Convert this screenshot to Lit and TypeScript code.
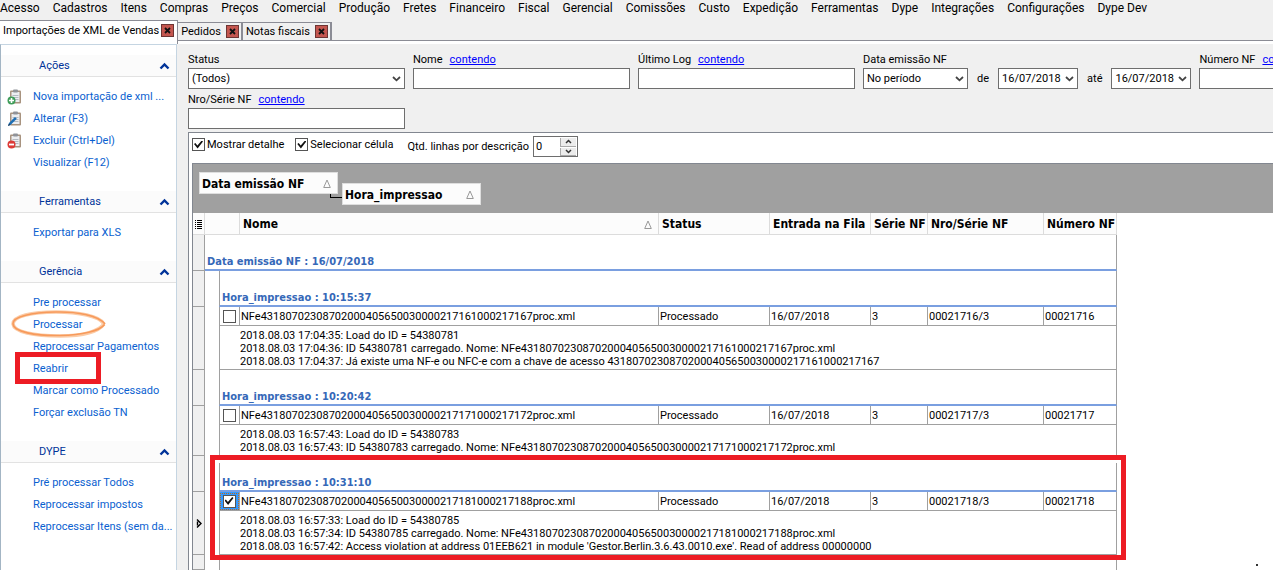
import { LitElement, html, css, svg, nothing } from "lit";
import { customElement, state } from "lit/decorators.js";
import { classMap } from "lit/directives/class-map.js";

const MENU = [
  "Acesso", "Cadastros", "Itens", "Compras", "Preços", "Comercial", "Produção", "Fretes",
  "Financeiro", "Fiscal", "Gerencial", "Comissões", "Custo", "Expedição", "Ferramentas",
  "Dype", "Integrações", "Configurações", "Dype Dev",
];

const TABS = ["Importações de XML de Vendas", "Pedidos", "Notas fiscais"];

type Mark = "ellipse" | "box";
interface Action { label: string; icon?: "add" | "edit" | "remove"; mark?: Mark; }
interface Section { title: string; items: Action[]; }

const SECTIONS: Section[] = [
  {
    title: "Ações",
    items: [
      { label: "Nova importação de xml ...", icon: "add" },
      { label: "Alterar (F3)", icon: "edit" },
      { label: "Excluir (Ctrl+Del)", icon: "remove" },
      { label: "Visualizar (F12)" },
    ],
  },
  { title: "Ferramentas", items: [{ label: "Exportar para XLS" }] },
  {
    title: "Gerência",
    items: [
      { label: "Pre processar" },
      { label: "Processar", mark: "ellipse" },
      { label: "Reprocessar Pagamentos" },
      { label: "Reabrir", mark: "box" },
      { label: "Marcar como Processado" },
      { label: "Forçar exclusão TN" },
    ],
  },
  {
    title: "DYPE",
    items: [
      { label: "Pré processar Todos" },
      { label: "Reprocessar impostos" },
      { label: "Reprocessar Itens (sem da..." },
    ],
  },
];

interface Entry {
  time: string; file: string; number: string; log: string[]; selected?: boolean;
}

const ENTRIES: Entry[] = [
  {
    time: "10:15:37",
    file: "NFe43180702308702000405650030000217161000217167proc.xml",
    number: "00021716",
    log: [
      "2018.08.03 17:04:35: Load do ID = 54380781",
      "2018.08.03 17:04:36: ID 54380781 carregado. Nome: NFe43180702308702000405650030000217161000217167proc.xml",
      "2018.08.03 17:04:37: Já existe uma NF-e ou NFC-e com a chave de acesso 43180702308702000405650030000217161000217167",
    ],
  },
  {
    time: "10:20:42",
    file: "NFe43180702308702000405650030000217171000217172proc.xml",
    number: "00021717",
    log: [
      "2018.08.03 16:57:43: Load do ID = 54380783",
      "2018.08.03 16:57:43: ID 54380783 carregado. Nome: NFe43180702308702000405650030000217171000217172proc.xml",
    ],
  },
  {
    time: "10:31:10",
    file: "NFe43180702308702000405650030000217181000217188proc.xml",
    number: "00021718",
    selected: true,
    log: [
      "2018.08.03 16:57:33: Load do ID = 54380785",
      "2018.08.03 16:57:34: ID 54380785 carregado. Nome: NFe43180702308702000405650030000217181000217188proc.xml",
      "2018.08.03 16:57:42: Access violation at address 01EEB621 in module 'Gestor.Berlin.3.6.43.0010.exe'. Read of address 00000000",
    ],
  },
];

const chevron = html`<svg class="chevron" width="9" height="6" viewBox="0 0 9 6"><path d="M1 1 L4.5 4.3 L8 1" fill="none" stroke="#444" stroke-width="1.8"/></svg>`;
const triangle = html`<svg class="triangle" width="8" height="9" viewBox="0 0 8 9"><path d="M4 1 L7.3 8.5 H0.7 Z" fill="none" stroke="#999" stroke-width="1"/></svg>`;

const badges = {
  add: svg`<circle cx="4.5" cy="11.5" r="4" fill="#3f9d5a"/><path d="M4.5 9v5M2 11.5h5" stroke="#fff" stroke-width="1.6"/>`,
  edit: svg`<path d="M1 15 L2 12 L8 6 L9.8 7.8 L4 13.5 Z" fill="#1d6fb5"/><path d="M1 15 L2 12.5 L3.5 14 Z" fill="#173a5c"/>`,
  remove: svg`<circle cx="4.5" cy="11.5" r="4" fill="#dd3a36"/><path d="M2 11.5h5" stroke="#fff" stroke-width="1.8"/>`,
};

const clipboard = (kind: "add" | "edit" | "remove") => html`
  <svg width="16" height="16" viewBox="0 0 16 16" aria-hidden="true">
    <rect x="3" y="1.5" width="11" height="13" rx="1" fill="#a8937f"/>
    <rect x="4.5" y="3" width="8" height="10" fill="#eceef1"/>
    <path d="M5.5 6.5h6M5.500 8.500h6M5.500 10.500h6" stroke="#b4bac2" stroke-width="1"/>
    <rect x="6" y="0.5" width="5" height="3" rx="1" fill="#909399"/>
    ${badges[kind]}
  </svg>`;

@customElement("side-panel")
class SidePanel extends LitElement {
  static styles = css`
    :host {
      display: block;
      box-sizing: border-box;
      padding-top: 10px;
      background: #fff;
      border: 1px solid #c5d5e2;
      border-left-color: #a3b5c4;
      border-bottom: 0;
      font: 11px/22px Roboto, "Liberation Sans", sans-serif;
    }
    section { padding-bottom: 17px; }
    .head {
      display: flex;
      align-items: center;
      justify-content: space-between;
      width: 100%;
      height: 22px;
      margin: 0 0 9px;
      padding: 0 6px 0 38px;
      border: 0;
      border-bottom: 1px solid #e2e2e2;
      background: #fbfbfb;
      color: #003399;
      font: inherit;
      line-height: 20px;
    }
    ul { list-style: none; margin: 0; padding: 0; }
    li {
      position: relative;
      display: grid;
      grid-template-columns: 26px 1fr;
      align-items: center;
      height: 22px;
      padding-left: 6px;
    }
    a { grid-column: 2; color: #0a5fd0; text-decoration: none; white-space: nowrap; }
    svg { grid-row: 1; }
    .ellipse { position: absolute; left: 9px; top: -5px; z-index: 1; pointer-events: none; }
    .box {
      position: absolute;
      left: 14px;
      top: -6px;
      width: 86px;
      height: 32px;
      box-sizing: border-box;
      border: 5px solid #ed1c24;
      z-index: 1;
      pointer-events: none;
    }
  `;

  private mark(kind?: Mark) {
    if (kind === "box") return html`<span class="box"></span>`;
    if (kind === "ellipse") {
      return html`<svg class="ellipse" width="98" height="30" viewBox="0 0 98 30">
        <path d="M94 15 C90 7 68 3 46 3 C22 3 3 7 3 15 C4 23 24 27 50 27 C74 27 89 22 94 15" fill="none" stroke="#fbcba6" stroke-width="3.5"/>
        <path d="M95 15 C88 6 66 2.5 46 3 C20 3.5 3 8 3 14.5 C3 23 26 27 50 26.5 C72 26 90 22 94.5 15.5" fill="none" stroke="#f79a5b" stroke-width="1.6"/>
      </svg>`;
    }
    return nothing;
  }

  render() {
    return SECTIONS.map((s) => html`
      <section>
        <button class="head" aria-expanded="true">
          ${s.title}
          <svg width="11" height="8" viewBox="0 0 11 8"><path d="M1.5 6.5 L5.5 2.5 L9.5 6.5" fill="none" stroke="#003399" stroke-width="2.4"/></svg>
        </button>
        <ul>
          ${s.items.map((i) => html`<li>
            ${i.icon ? clipboard(i.icon) : nothing}
            <a href="#">${i.label}</a>
            ${this.mark(i.mark)}
          </li>`)}
        </ul>
      </section>`);
  }
}

const tick = css`
  .tick {
    appearance: none;
    box-sizing: border-box;
    width: 13px;
    height: 13px;
    margin: 0;
    border: 1px solid #555;
    background: #fff;
    display: inline-grid;
    place-content: center;
    flex: none;
  }
  .tick:checked::before {
    content: "";
    width: 9px;
    height: 8px;
    background: #111;
    clip-path: polygon(0 45%, 15% 32%, 38% 62%, 86% 0, 100% 14%, 40% 100%);
  }
`;

@customElement("filter-panel")
class FilterPanel extends LitElement {
  static styles = css`
    :host { display: block; padding: 9px 0 3px 11px; overflow: hidden; }
    .row { display: flex; align-items: flex-end; gap: 8px; }
    .row + .row { margin-top: 4px; }
    .field { flex: none; width: 217px; }
    .medium { width: 105px; }
    .date { width: 80px; }
    .caption { display: flex; gap: 7px; height: 13px; margin-bottom: 2px; line-height: 13px; white-space: nowrap; }
    .caption a { color: #0000ff; }
    .word { line-height: 21px; padding: 0 1px; }
    input, select {
      appearance: none;
      box-sizing: border-box;
      width: 100%;
      height: 21px;
      margin: 0;
      padding: 0 3px;
      border: 1px solid #6e6e6e;
      border-radius: 0;
      background: #fff;
      color: #000;
      font: inherit;
      display: block;
    }
    .combo { display: grid; align-items: center; }
    .combo > * { grid-area: 1 / 1; }
    .chevron { justify-self: end; margin-right: 4px; pointer-events: none; }
  `;

  private combo(id: string, value: string, label?: string) {
    return html`<div class="combo">
      <select id=${id} aria-label=${label ?? nothing}><option>${value}</option></select>${chevron}
    </div>`;
  }

  private text(id: string, label: string) {
    return html`<div class="field">
      <div class="caption"><label for=${id}>${label}</label><a href="#">contendo</a></div>
      <input id=${id} type="text">
    </div>`;
  }

  render() {
    return html`
      <div class="row">
        <div class="field">
          <div class="caption"><label for="status">Status</label></div>
          ${this.combo("status", "(Todos)")}
        </div>
        ${this.text("nome", "Nome")}
        ${this.text("log", "Último Log")}
        <div class="field medium">
          <div class="caption"><label for="periodo">Data emissão NF</label></div>
          ${this.combo("periodo", "No período")}
        </div>
        <span class="word">de</span>
        <div class="field date">${this.combo("de", "16/07/2018", "de")}</div>
        <span class="word">até</span>
        <div class="field date">${this.combo("ate", "16/07/2018", "até")}</div>
        ${this.text("numero", "Número NF")}
      </div>
      <div class="row">${this.text("serie", "Nro/Série NF")}</div>
    `;
  }
}

@customElement("data-grid")
class DataGrid extends LitElement {
  static styles = [tick, css`
    :host { display: block; border: 1px solid #828790; border-width: 1px 0 0 1px; }
    .groupbar {
      display: flex;
      align-items: flex-start;
      height: 49px;
      box-sizing: border-box;
      padding: 8px 0 0 6px;
      background: #a0a0a0;
    }
    .chip {
      display: flex;
      align-items: center;
      justify-content: space-between;
      box-sizing: border-box;
      width: 139px;
      height: 22px;
      padding: 1px 6px 0 2px;
      border: 1px solid #dedede;
      background: #fcfcfc;
      color: #000;
      font: bold 12px/18px "DejaVu Sans Condensed", "DejaVu Sans", sans-serif;
      white-space: nowrap;
    }
    .lower { margin-top: 11px; }
    .link {
      width: 11px;
      height: 3px;
      margin: 22px 0 0 -8px;
      border: 1px solid #000;
      border-width: 0 0 1px 1px;
    }
    .canvas { position: relative; width: 924px; }
    table { table-layout: fixed; width: 924px; border-collapse: separate; border-spacing: 0; }
    .c-mark { width: 12px; } .c-indent { width: 14px; } .c-check { width: 21px; }
    .c-name { width: 419px; } .c-status { width: 111px; } .c-entry { width: 101px; }
    .c-serie { width: 57px; } .c-nro { width: 116px; } .c-num { width: 73px; }
    th, td { padding: 0; text-align: left; white-space: nowrap; vertical-align: middle; }
    thead th {
      height: 20px;
      padding: 1px 0 0 3px;
      border: 1px solid #dcdcdc;
      border-width: 0 1px 1px 0;
      background: #fcfcfc;
      font: bold 12px/20px "DejaVu Sans Condensed", "DejaVu Sans", sans-serif;
    }
    .th { display: flex; align-items: center; justify-content: space-between; padding-right: 6px; }
    thead .corner { padding: 0; line-height: 0; text-align: center; }
    .mark {
      background: #f0f0f0;
      border: 1px solid #a0a0a0;
      border-width: 0 1px 1px 0;
      line-height: 0;
      text-align: center;
    }
    .group {
      height: 34px;
      padding-left: 2px;
      border-bottom: 2px solid #7a9fe0;
      border-right: 1px solid #a0a0a0;
      color: #3568b8;
      font: bold 11px/14px "DejaVu Sans Condensed", "DejaVu Sans", sans-serif;
      vertical-align: bottom;
    }
    .inner { border-left: 1px solid #a0a0a0; }
    .cell { height: 17px; padding: 1px 0 0 1px; border: 1px solid #a0a0a0; border-width: 0 1px 1px 0; line-height: 17px; }
    .pick { height: 18px; padding: 0 1px 0 0; border-left-width: 1px; text-align: center; line-height: 0; }
    .focus { background: #3399ff; outline: 1px dotted #c06a1c; outline-offset: -2px; }
    .detail {
      padding: 3px 0 1px 20px;
      border: 1px solid #a0a0a0;
      border-top: 0;
      line-height: 13px;
    }
    .rest { height: 15px; border: 1px solid #a0a0a0; border-width: 0 1px; }
    .frame {
      position: absolute;
      left: 17px;
      bottom: 10px;
      width: 916px;
      height: 105px;
      box-sizing: border-box;
      border: 5px solid #ed1c24;
      box-shadow: inset 0 3px 0 #fff;
      pointer-events: none;
    }
  `];

  private group(e: Entry) {
    return html`
      <tr><td class="mark"></td><td></td><td class="group inner" colspan="7">Hora_impressao : ${e.time}</td></tr>
      <tr>
        <td class="mark" rowspan="2">${e.selected
          ? html`<svg width="6" height="9" viewBox="0 0 6 9"><path d="M1 0.5 L5 4.5 L1 8.5 M1.500 2.500v4" fill="none" stroke="#000" stroke-width="1.400"/></svg>`
          : nothing}</td>
        <td rowspan="2"></td>
        <td class=${classMap({ cell: true, pick: true, focus: !!e.selected })}>
          <input class="tick" type="checkbox" aria-label=${e.number} .checked=${!!e.selected}>
        </td>
        <td class="cell">${e.file}</td>
        <td class="cell">Processado</td>
        <td class="cell">16/07/2018</td>
        <td class="cell">3</td>
        <td class="cell">${e.number}/3</td>
        <td class="cell">${e.number}</td>
      </tr>
      <tr><td class="detail" colspan="7">${e.log.map((l) => html`<div>${l}</div>`)}</td></tr>`;
  }

  render() {
    return html`
      <div class="groupbar">
        <button class="chip">Data emissão NF ${triangle}</button>
        <span class="link"></span>
        <button class="chip lower">Hora_impressao ${triangle}</button>
      </div>
      <div class="canvas">
        <table>
          <colgroup>
            <col class="c-mark"><col class="c-indent"><col class="c-check"><col class="c-name">
            <col class="c-status"><col class="c-entry"><col class="c-serie"><col class="c-nro"><col class="c-num">
          </colgroup>
          <thead>
            <tr>
              <th class="corner"><svg width="7" height="10" viewBox="0 0 7 10"><path d="M0 1.5h1M2 1.5h5M0 3.5h1M2 3.5h5M0 5.5h1M2 5.5h5M0 7.5h1M2 7.5h5M0 9.5h1M2 9.5h5" stroke="#000"/></svg></th>
              <th colspan="2"></th>
              <th><div class="th">Nome ${triangle}</div></th>
              <th>Status</th>
              <th>Entrada na Fila</th>
              <th>Série NF</th>
              <th>Nro/Série NF</th>
              <th>Número NF</th>
            </tr>
          </thead>
          <tbody>
            <tr><td class="mark"></td><td class="group" colspan="8">Data emissão NF : 16/07/2018</td></tr>
            ${ENTRIES.map((e) => this.group(e))}
            <tr><td class="mark"></td><td></td><td class="rest" colspan="7"></td></tr>
          </tbody>
        </table>
        <div class="frame"></div>
      </div>`;
  }
}

@customElement("app-root")
class AppRoot extends LitElement {
  static styles = [tick, css`
    :host {
      display: flex;
      flex-direction: column;
      position: relative;
      height: 100vh;
      overflow: hidden;
      background: #f0f0f0;
      color: #000;
      font: 11px/13px Roboto, "Liberation Sans", sans-serif;
    }
    .menu { display: flex; gap: 13px; height: 20px; flex: none; }
    .menu button {
      margin: 0;
      padding: 0;
      border: 0;
      background: none;
      color: #000;
      font: 12px/16px Roboto, "Liberation Sans", sans-serif;
      height: 16px;
      white-space: nowrap;
    }
    .tabs { display: flex; align-items: flex-end; height: 24px; flex: none; background: linear-gradient(#f0f0f0 20px, #8b8c95 20px, #8b8c95 21px, #fff 21px); }
    .tab {
      display: flex;
      align-items: center;
      gap: 5px;
      box-sizing: border-box;
      height: 19px;
      margin-bottom: 3px;
      padding: 0 2px 0 3px;
      border: 1px solid #8b8c95;
      border-left: 0;
      border-right-width: 2px;
      white-space: nowrap;
    }
    .tab.active { height: 24px; margin: 0; padding: 0 3px 4px; gap: 2px; background: #fff; border-bottom: 0; border-right-width: 1px; }
    .tab button {
      box-sizing: border-box;
      width: 13px;
      height: 13px;
      padding: 0;
      border: 1px solid #6d3533;
      background: #c4564f;
      line-height: 0;
    }
    .body { display: grid; grid-template-columns: 177px minmax(0, 1fr); flex: 1; min-height: 0; }
    .main { display: flex; flex-direction: column; min-width: 0; min-height: 0; }
    .results { flex: 1; min-height: 0; margin-left: 11px; padding-left: 3px; background: #fff; border: 1px solid #828790; border-width: 1px 0 0 1px; }
    .toolbar { display: flex; align-items: flex-start; gap: 11px; height: 30px; }
    .option { display: flex; align-items: center; gap: 2px; padding-top: 5px; }
    .lines { display: flex; align-items: center; gap: 4px; padding: 3px 0 0 3px; }
    .spin { display: grid; grid-template-columns: 1fr 16px; box-sizing: border-box; width: 45px; height: 21px; border: 1px solid #6e6e6e; padding-right: 1px; }
    .spin input { appearance: textfield; grid-row: span 2; width: 100%; box-sizing: border-box; border: 0; padding: 0 2px; font: inherit; background: none; }
    .spin button { padding: 0; margin: 1px 0 0; border: 1px solid #a9a9a9; border-width: 0 0 1px 1px; background: #ececec; line-height: 0; }
    .dot { position: absolute; right: 15px; bottom: 4px; width: 2px; height: 2px; background: #333; }
  `];

  @state() private lines = 0;

  render() {
    return html`
      <nav class="menu">${MENU.map((m) => html`<button>${m}</button>`)}</nav>
      <div class="tabs">
        ${TABS.map((t, i) => html`<div class=${classMap({ tab: true, active: i === 0 })}>
          <span>${t}</span>
          <button aria-label="Fechar"><svg width="7" height="7" viewBox="0 0 7 7"><path d="M1 1 L6 6 M6 1 L1 6" stroke="#111" stroke-width="1.8"/></svg></button>
        </div>`)}
      </div>
      <div class="body">
        <side-panel></side-panel>
        <main class="main">
          <filter-panel></filter-panel>
          <div class="results">
            <div class="toolbar">
              <label class="option"><input class="tick" type="checkbox" checked>Mostrar detalhe</label>
              <label class="option"><input class="tick" type="checkbox" checked>Selecionar célula</label>
              <div class="lines">
                <label for="lines">Qtd. linhas por descrição</label>
                <div class="spin">
                  <input id="lines" type="number" .value=${String(this.lines)}>
                  <button aria-label="Aumentar" @click=${() => this.lines++}><svg width="7" height="5" viewBox="0 0 7 5"><path d="M1 4 L3.5 1.5 L6 4" fill="none" stroke="#333" stroke-width="1.5"/></svg></button>
                  <button aria-label="Diminuir" @click=${() => this.lines--}><svg width="7" height="5" viewBox="0 0 7 5"><path d="M1 1 L3.5 3.5 L6 1" fill="none" stroke="#333" stroke-width="1.5"/></svg></button>
                </div>
              </div>
            </div>
            <data-grid></data-grid>
          </div>
        </main>
      </div>
      <span class="dot"></span>
    `;
  }
}
